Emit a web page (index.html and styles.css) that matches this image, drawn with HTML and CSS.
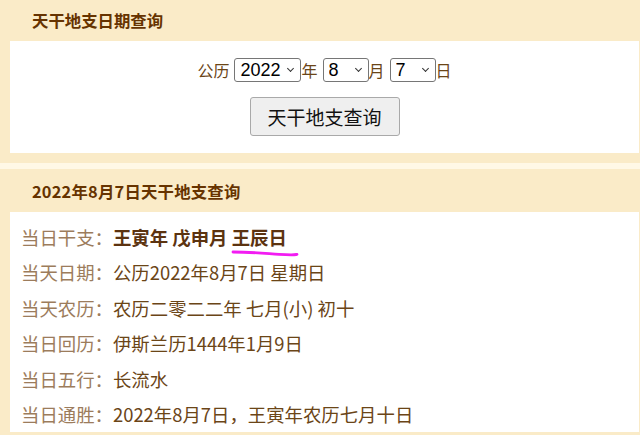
FILE: index.html
```html
<!DOCTYPE html>
<html lang="zh-CN">
<head>
<meta charset="utf-8">
<title>天干地支日期查询</title>
<link rel="stylesheet" href="styles.css">
</head>
<body>
  <section class="panel">
    <h2 class="panel-title">天干地支日期查询</h2>
    <form class="panel-body query-form">
      <div class="date-row">
        <span class="date-text">公历</span>
        <span class="select-wrap"><select class="sel sel-year"><option>2021</option><option selected>2022</option><option>2023</option></select></span>
        <span class="date-text">年</span>
        <span class="select-wrap"><select class="sel sel-short"><option>7</option><option selected>8</option><option>9</option></select></span>
        <span class="date-text">月</span>
        <span class="select-wrap"><select class="sel sel-short"><option>6</option><option selected>7</option><option>8</option></select></span>
        <span class="date-text">日</span>
      </div>
      <button type="button" class="query-btn">天干地支查询</button>
    </form>
  </section>

  <section class="panel panel-result">
    <h2 class="panel-title title-tall">2022年8月7日天干地支查询</h2>
    <div class="panel-body">
      <ul class="info-list">
        <li><span class="info-label">当日干支：</span><span class="info-value strong">王寅年 戊申月 <span class="mark">王辰日<svg class="mark-line" width="70" height="7" viewBox="0 0 70 7"><path d="M2 2 C20 2 34 3.4 48 4.3 S62 5 66 4.4" fill="none" stroke="#f21cf2" stroke-width="2.8" stroke-linecap="round"/></svg></span></span></li>
        <li><span class="info-label">当天日期：</span><span class="info-value">公历2022年8月7日 星期日</span></li>
        <li><span class="info-label">当天农历：</span><span class="info-value">农历二零二二年 七月(小) 初十</span></li>
        <li><span class="info-label">当日回历：</span><span class="info-value">伊斯兰历1444年1月9日</span></li>
        <li><span class="info-label">当日五行：</span><span class="info-value">长流水</span></li>
        <li><span class="info-label">当日通胜：</span><span class="info-value">2022年8月7日，王寅年农历七月十日</span></li>
      </ul>
    </div>
  </section>
</body>
</html>
```

FILE: styles.css
```css
html, body {
  margin: 0;
  padding: 0;
}

body {
  background: #fff8e6;
  font-family: "Noto Sans CJK SC", "Liberation Sans", sans-serif;
  color: #6b4517;
  overflow: hidden;
}

.panel {
  background: #faebc8;
  padding: 0 1px 10px 10px;
  margin-bottom: 6px;
}

.panel-title {
  margin: 0;
  height: 41px;
  line-height: 41px;
  padding-left: 22px;
  font-size: 16.4px;
  font-weight: bold;
  color: #663300;
}

.title-tall {
  height: 43px;
  line-height: 44px;
  letter-spacing: 0.2px;
}

.panel-body {
  background: #fff;
}

/* date query form */
.query-form {
  margin: 0;
  padding: 17px 0;
  display: flex;
  flex-direction: column;
  align-items: center;
  gap: 15px;
}

.date-row {
  display: flex;
  align-items: center;
  height: 24px;
}

.date-text {
  font-size: 16px;
  line-height: 24px;
  color: #6b4517;
}

.select-wrap {
  position: relative;
  display: inline-block;
  margin-left: 5px;
  height: 24px;
}

.select-wrap::after {
  content: "";
  position: absolute;
  right: 8px;
  top: 8px;
  width: 4px;
  height: 4px;
  border-right: 1.3px solid #333;
  border-bottom: 1.3px solid #333;
  transform: rotate(45deg);
  pointer-events: none;
}

.sel {
  appearance: none;
  -webkit-appearance: none;
  display: block;
  box-sizing: border-box;
  height: 24px;
  margin: 0;
  padding: 0 0 0 5px;
  border: 1px solid #767676;
  border-radius: 3px;
  background: #fff;
  font-family: "Liberation Sans", Arial, sans-serif;
  font-size: 18px;
  line-height: 22px;
  color: #000;
}

.sel-year {
  width: 67px;
}

.sel-short {
  width: 46px;
}

.query-btn {
  box-sizing: border-box;
  width: 150px;
  height: 39px;
  margin: 0;
  padding: 0;
  border: 1px solid #a9a9a9;
  border-radius: 3px;
  background: #efefef;
  font-family: "Noto Sans CJK SC", "Liberation Sans", sans-serif;
  font-size: 19px;
  color: #111;
}

/* result list */
.info-list {
  list-style: none;
  margin: 0;
  padding: 8px 0 0 11px;
}

.info-list li {
  font-size: 18.4px;
  line-height: 35.4px;
  height: 35.4px;
  white-space: nowrap;
}

.info-label {
  color: #9c7c5c;
}

.info-value {
  color: #6b4517;
}

.strong {
  font-weight: bold;
  color: #5c3310;
}

.mark {
  position: relative;
  display: inline-block;
}

.mark-line {
  position: absolute;
  left: -1px;
  top: 30px;
  overflow: visible;
}
```
